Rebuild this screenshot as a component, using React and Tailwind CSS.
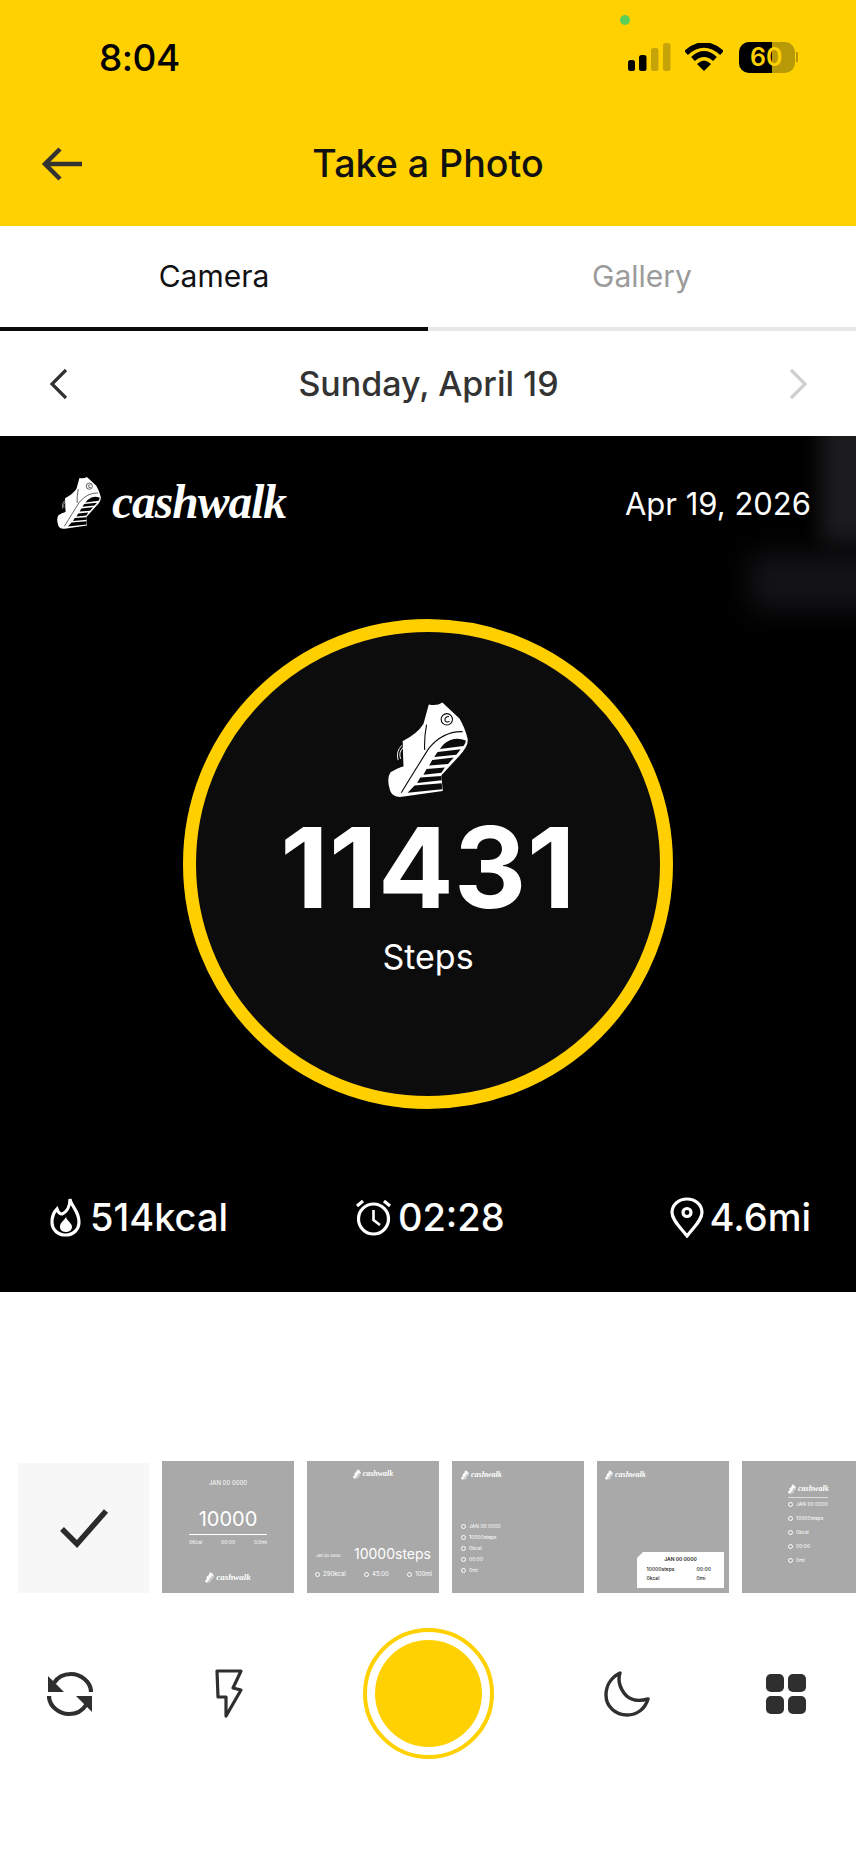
const Shoe = ({ className = "", line = "#0b0b0b" }) => (
  <svg viewBox="370 55 265 310" className={className}>
    <path fill="#fff" d="M505 66 Q530 72 548 60 L602 110 Q620 140 628 175 Q631 198 602 228 L545 290 L549 340 L420 358 Q392 361 383 340 Q370 300 384 280 Q406 268 420 262 L422 182 Q468 160 488 128 Z" />
    <path fill="none" stroke={line} strokeWidth="3.5" d="M612 152 Q550 150 505 205 Q470 260 418 345 M498 130 Q490 170 492 210" />
    <path fill={line} d="M552 192 Q585 165 622 180 Q622 190 615 197 L540 207 Z M533 216 L606 208 L592 225 L522 232 Z M516 242 L584 234 L566 254 L506 259 Z M498 270 L556 265 L545 282 L488 288 Z M478 297 L545 292 L546 306 L468 314 Z M460 322 L546 315 L547 334 L438 345 Z" />
    <circle cx="562" cy="113" r="18" fill="none" stroke={line} strokeWidth="3.5" />
    <path fill="none" stroke={line} strokeWidth="3.5" d="M569 104 Q556 104 556 115 Q557 124 571 120" />
    <path fill={line} d="M422 185 L425 262 L400 268 Q414 250 416 230 Q418 205 410 192 Z" />
    <path fill="none" stroke="#fff" strokeWidth="3" d="M408 242 Q400 215 420 195 M416 238 Q408 218 424 202" />
  </svg>
);

const MiniLogo = ({ size = "text-[8px]", shoe = "w-[8px] h-[10px]" }) => (
  <div className="flex items-center gap-[2px] text-white">
    <Shoe className={shoe} line="#a9a9a9" />
    <span className={`${size} font-['Liberation_Serif',serif] italic font-bold leading-none`}>cashwalk</span>
  </div>
);

const Dot = () => <span className="w-[5px] h-[5px] rounded-full border border-white" />;

const Thumb = ({ children, className = "" }) => (
  <div className={`w-[132px] h-[132px] shrink-0 bg-[#a9a9a9] text-white flex flex-col overflow-hidden ${className}`}>{children}</div>
);

const Row = ({ children, className = "text-[5px]" }) => (
  <div className={`flex items-center gap-[3px] leading-none ${className}`}><Dot />{children}</div>
);

export default function App() {
  return (
    <div className="w-[856px] h-[1852px] bg-white overflow-hidden font-[Inter,sans-serif]">
      <header className="relative h-[226px] bg-[#ffd100] text-[#111]">
        <span className="absolute left-[620px] top-[15px] w-[10px] h-[10px] rounded-full bg-[#5ccf58]" />
        <div className="h-[114px] flex items-center justify-between pl-[99px] pr-[59px]">
          <span className="text-[37px] font-medium leading-none tracking-[-0.5px] text-black">8:04</span>
          <div className="flex items-center">
            <svg width="44" height="30" viewBox="0 0 44 30">
              <rect x="1" y="18" width="7" height="11" rx="2.5" fill="#000" />
              <rect x="12" y="13" width="7.5" height="16" rx="2.5" fill="#000" />
              <rect x="24" y="6" width="7.5" height="23" rx="2.5" fill="#c7a30a" />
              <rect x="36" y="1" width="7.5" height="28" rx="2.5" fill="#c7a30a" />
            </svg>
            <svg width="38" height="28" viewBox="0 0 38 28" className="ml-[14px] mr-[16px]">
              <path d="M1 10 Q19 -6 37 10" fill="none" stroke="#000" strokeWidth="5.5" />
              <path d="M8 16 Q19 6 30 16" fill="none" stroke="#000" strokeWidth="5.5" />
              <path d="M12 21 Q19 14 26 21 L19 28 Z" fill="#000" />
            </svg>
            <div className="relative w-[58px] h-[31px]">
              <div className="absolute inset-0 rounded-[10px] bg-[#b89a08] overflow-hidden mr-[2px]">
                <div className="w-[33px] h-full bg-black" />
              </div>
              <span className="absolute -right-[1px] top-[10px] w-[2px] h-[10px] bg-[#b89a08]" />
              <span className="absolute left-[11px] top-0 h-full flex items-center text-[25px] font-semibold leading-none text-[#ffd100]">60</span>
            </div>
          </div>
        </div>
        <div className="relative h-[100px] flex items-center justify-center">
          <svg width="42" height="36" viewBox="0 0 42 36" className="absolute left-[41px] top-[32px]">
            <path d="M19 3 L4 18 L19 33 M4 18 H41" fill="none" stroke="#333" strokeWidth="4.5" />
          </svg>
          <h1 className="text-[37.6px] font-medium leading-none">Take a Photo</h1>
        </div>
      </header>

      <nav className="flex h-[105px] bg-white">
        <div className="flex-1 flex flex-col">
          <div className="flex-1 flex items-center justify-center text-[30px] text-[#111]">Camera</div>
          <div className="h-[4px] bg-[#0a0a0a]" />
        </div>
        <div className="flex-1 flex flex-col">
          <div className="flex-1 flex items-center justify-center text-[30px] text-[#9b9b9b]">Gallery</div>
          <div className="h-[4px] bg-[#e8e8e8]" />
        </div>
      </nav>

      <div className="h-[105px] flex items-center justify-between pl-[49px] pr-[48px]">
        <svg width="20" height="32" viewBox="0 0 20 32"><path d="M17 2 L3 16 L17 30" fill="none" stroke="#333" strokeWidth="3.2" /></svg>
        <span className="text-[34px] font-medium text-[#333] leading-none">Sunday, April 19</span>
        <svg width="20" height="32" viewBox="0 0 20 32"><path d="M3 2 L17 16 L3 30" fill="none" stroke="#cfcfcf" strokeWidth="3.2" /></svg>
      </div>

      <section className="relative h-[856px] bg-black text-white overflow-hidden flex flex-col">
        <div className="absolute right-[-20px] top-[-20px] w-[56px] h-[128px] bg-[#1b1b1e] blur-[10px]" />
        <div className="absolute right-[-30px] top-[118px] w-[136px] h-[56px] bg-[#141418] blur-[14px]" />
        <div className="relative h-[134px] flex items-center justify-between pl-[56px] pr-[45px]">
          <div className="flex items-center gap-[10px]">
            <Shoe className="w-[46px] h-[54px]" line="#000" />
            <span className="text-[47.5px] font-['Liberation_Serif',serif] italic font-bold leading-none tracking-[-1px]">cashwalk</span>
          </div>
          <span className="text-[31px] leading-none">Apr 19, 2026</span>
        </div>
        <div className="relative mt-[49px] mx-auto w-[490px] h-[490px] shrink-0 rounded-full border-[13px] border-[#ffcf00] bg-[#0c0c0c] flex flex-col items-center">
          <Shoe className="w-[84px] h-[98px] mt-[69px]" line="#0c0c0c" />
          <div className="text-[112px] font-bold leading-none mt-[12px] tracking-[0.5px]">11431</div>
          <div className="text-[34px] leading-none mt-[17px]">Steps</div>
        </div>
        <div className="relative mt-[78px] h-[60px] flex items-center justify-between pl-[50px] pr-[45px] text-[38px] leading-none">
          <div className="flex items-center gap-[9px]">
            <svg width="31" height="40" viewBox="0 0 31 40" fill="none" stroke="#fff" strokeWidth="3.2">
              <path d="M20 2 C21 9 29 14 29 25 C29 33 23 38 15.5 38 C8 38 2 33 2 25 C2 20 4 15 7 12 C8 15 10 17 12 17 C17 15 20 9 20 2 Z" />
              <path d="M16 20 C17 24 22 26 22 30 C22 33 19 35 15.5 35 C12 35 9.5 32 10 29 C10.5 25 14 24 16 20 Z" fill="#fff" stroke="none" />
            </svg>
            <span className="font-medium">514kcal</span>
          </div>
          <div className="flex items-center gap-[6px] mr-[38px]">
            <svg width="37" height="37" viewBox="0 0 37 37" fill="none" stroke="#fff" strokeWidth="3.2">
              <circle cx="18.5" cy="20" r="15" />
              <path d="M18.5 11 V21 L25 26" strokeWidth="2.6" />
              <path d="M2 7 L8 2 M35 7 L29 2" />
            </svg>
            <span className="font-medium">02:28</span>
          </div>
          <div className="flex items-center gap-[6px]">
            <svg width="34" height="41" viewBox="0 0 34 41" fill="none" stroke="#fff" strokeWidth="3.2">
              <path d="M17 39 C10 30 2 23 2 15.5 C2 7.5 9 2 17 2 C25 2 32 7.5 32 15.5 C32 23 24 30 17 39 Z" />
              <circle cx="17" cy="15.5" r="4" />
            </svg>
            <span className="font-medium">4.6mi</span>
          </div>
        </div>
      </section>

      <div className="mt-[169px] h-[132px] flex gap-[13px] pl-[18px] overflow-hidden">
        <div className="w-[131px] h-[130px] shrink-0 self-end bg-[#f7f7f7] flex items-center justify-center">
          <svg width="50" height="42" viewBox="0 0 50 42"><path d="M3 22 L18 37 L47 4" fill="none" stroke="#2b2b2b" strokeWidth="5.5" /></svg>
        </div>

        <Thumb className="items-center">
          <span className="text-[6px] mt-[19px] leading-none">JAN 00 0000</span>
          <span className="text-[20px] leading-none mt-[23px]">10000</span>
          <span className="w-[78px] h-px bg-white mt-[5px]" />
          <div className="w-[78px] flex justify-between text-[5px] leading-none mt-[5px]"><span>0Kcal</span><span>00:00</span><span>0.0mi</span></div>
          <div className="mt-[27px]"><MiniLogo size="text-[9px]" shoe="w-[9px] h-[11px]" /></div>
        </Thumb>

        <Thumb>
          <div className="flex justify-center mt-[8px]"><MiniLogo /></div>
          <div className="flex items-end justify-between mt-[68px] pl-[9px] pr-[8px]">
            <span className="text-[4px] leading-none mb-[3px]">Jan 00 0000</span>
            <span className="text-[14px] leading-none">10000steps</span>
          </div>
          <div className="flex justify-between mt-[10px] pl-[8px] pr-[7px]">
            <Row className="text-[6px]">290kcal</Row>
            <Row className="text-[6px]">45:00</Row>
            <Row className="text-[6px]">100mi</Row>
          </div>
        </Thumb>

        <Thumb className="pl-[9px]">
          <div className="mt-[9px]"><MiniLogo /></div>
          <div className="flex flex-col gap-[6px] mt-[44px]">
            <Row>JAN 00 0000</Row>
            <Row>10000steps</Row>
            <Row>0kcal</Row>
            <Row>00:00</Row>
            <Row>0mi</Row>
          </div>
        </Thumb>

        <Thumb className="pl-[8px]">
          <div className="mt-[9px]"><MiniLogo /></div>
          <div className="w-[87px] h-[36px] mt-[72px] ml-[32px] bg-white text-[#222] [clip-path:polygon(6px_0,100%_0,100%_100%,0_100%,0_6px)] flex flex-col items-center pt-[5px]">
            <span className="text-[5px] font-semibold leading-none">JAN 00 0000</span>
            <div className="w-[68px] grid grid-cols-2 gap-y-[4px] text-[5px] leading-none mt-[5px] font-medium">
              <span>10000steps</span><span className="pl-[16px]">00:00</span>
              <span>0kcal</span><span className="pl-[16px]">0mi</span>
            </div>
          </div>
        </Thumb>

        <Thumb className="pl-[46px]">
          <div className="mt-[23px]"><MiniLogo /></div>
          <span className="w-[40px] h-px bg-white/60 mt-[3px]" />
          <div className="flex flex-col gap-[9px] mt-[4px]">
            <Row>JAN 00 0000</Row>
            <Row>10000steps</Row>
            <Row>0kcal</Row>
            <Row>00:00</Row>
            <Row>0mi</Row>
          </div>
        </Thumb>
      </div>

      <div className="mt-[35px] h-[131px] grid grid-cols-[140px_178px_220px_178px_140px] items-center justify-items-center">
        <svg width="46" height="46" viewBox="0 0 46 46" fill="none" stroke="#2f2f2f" strokeWidth="4.2">
          <path d="M44 21 C44 11 34 3 24 3 C16 3 10 7 7 12" />
          <path d="M2 25 C2 35 12 43 22 43 C30 43 36 39 39 34" />
          <path d="M1 5 L1 21 L17 21 Z M45 41 L45 25 L29 25 Z" fill="#2f2f2f" stroke="none" />
        </svg>
        <svg width="28" height="50" viewBox="0 0 28 50" fill="none" stroke="#2f2f2f" strokeWidth="3.2" strokeLinejoin="round">
          <path d="M2 2 H26 L18 19 L26 21 L11 47 V28 H3 Z" />
        </svg>
        <div className="w-[131px] h-[131px] rounded-full border-[4px] border-[#ffd100] p-[8px]">
          <div className="w-full h-full rounded-full bg-[#ffd100]" />
        </div>
        <svg width="46" height="46" viewBox="0 0 46 46" fill="none" stroke="#2f2f2f" strokeWidth="3.4" strokeLinejoin="round">
          <path d="M16 2 C6 7 2 16 2 24 C2 36 12 44 23 44 C33 44 41 38 44 28 C34 31 25 29 20 22 C15 15 14 8 16 2 Z" />
        </svg>
        <div className="grid grid-cols-2 gap-[4px] w-[40px]">
          <span className="h-[18px] rounded-[5px] bg-[#2f2f2f]" />
          <span className="h-[18px] rounded-[5px] bg-[#2f2f2f]" />
          <span className="h-[18px] rounded-[5px] bg-[#2f2f2f]" />
          <span className="h-[18px] rounded-[5px] bg-[#2f2f2f]" />
        </div>
      </div>
    </div>
  );
}
